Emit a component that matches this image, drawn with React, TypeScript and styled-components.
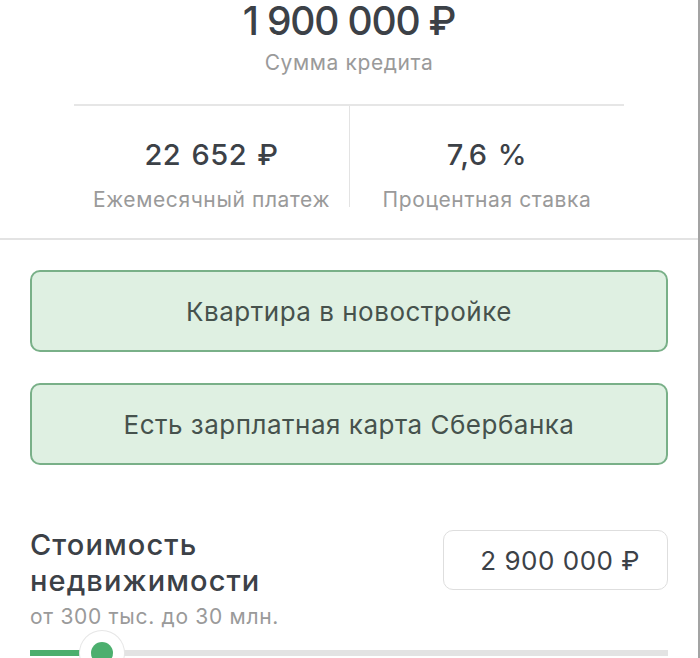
import React from 'react';
import styled, { createGlobalStyle } from 'styled-components';

const GlobalStyle = createGlobalStyle`
  body {
    margin: 0;
    background: #ffffff;
    font-family: Inter, Roboto, "Liberation Sans", sans-serif;
  }
`;

const Screen = styled.div`
  width: 700px;
  height: 658px;
  box-sizing: border-box;
  overflow: hidden;
  background: #ffffff;
  border-right: 2px solid #a3a3a3;
`;

const Summary = styled.section`
  display: flex;
  flex-direction: column;
  align-items: center;
  border-bottom: 2px solid #e3e3e3;
  padding-bottom: 31px;
`;

const LoanAmount = styled.div`
  font-size: 39px;
  line-height: 42px;
  font-weight: 500;
  color: #3c4147;
  letter-spacing: -1.2px;
`;

const Caption = styled.div`
  font-size: 21px;
  line-height: 1;
  color: #9a9a9a;
  letter-spacing: 0.6px;
`;

const Stats = styled.div`
  display: grid;
  grid-template-columns: 1fr 1fr;
  width: 550px;
  margin-top: 31px;
  border-top: 2px solid #e6e6e6;
`;

const Stat = styled.div<{ $divider?: boolean }>`
  display: flex;
  flex-direction: column;
  align-items: center;
  padding-top: 34px;
  height: 101px;
  box-sizing: border-box;
  border-left: ${(p) => (p.$divider ? '1px solid #e3e3e3' : 'none')};
`;

const StatValue = styled.div`
  font-size: 29px;
  line-height: 30px;
  font-weight: 500;
  color: #3c4147;
  margin-bottom: 19px;
  letter-spacing: 0.5px;
  word-spacing: 2px;
`;

const Options = styled.div`
  display: flex;
  flex-direction: column;
  gap: 31px;
  padding: 30px 30px 0 30px;
`;

const OptionButton = styled.button`
  height: 82px;
  box-sizing: border-box;
  border: 2px solid #79b088;
  border-radius: 10px;
  background: #dff0e2;
  font-family: Inter, Roboto, "Liberation Sans", sans-serif;
  font-size: 26px;
  letter-spacing: 0.5px;
  color: #46524d;
  cursor: pointer;
`;

const Field = styled.section`
  display: grid;
  grid-template-columns: 1fr auto;
  align-items: start;
  padding: 62px 30px 0 30px;
`;

const FieldLabel = styled.div`
  font-size: 29px;
  line-height: 36px;
  font-weight: 500;
  color: #3c4147;
  letter-spacing: 1.1px;
`;

const Range = styled.div`
  margin-top: 7px;
  font-size: 21px;
  line-height: 22px;
  color: #9a9a9a;
  letter-spacing: 0.7px;
`;

const ValueBox = styled.div`
  width: 225px;
  height: 60px;
  box-sizing: border-box;
  border: 1px solid #dedede;
  border-radius: 10px;
  display: flex;
  align-items: center;
  justify-content: flex-end;
  padding-right: 27px;
  font-size: 26px;
  letter-spacing: 0.5px;
  color: #3c4147;
  margin-top: 3px;
`;

const Slider = styled.div`
  position: relative;
  margin: 22px 30px 0 30px;
  height: 6px;
  background: #e3e3e3;
`;

const SliderFill = styled.div`
  height: 100%;
  background: #4caf6e;
`;

const Thumb = styled.div`
  position: absolute;
  top: -19px;
  width: 44px;
  height: 44px;
  margin-left: -22px;
  border-radius: 50%;
  background: #ffffff;
  box-shadow: 0 0 0 1px #e6e6e6;
  display: flex;
  align-items: center;
  justify-content: center;

  &::after {
    content: '';
    width: 22px;
    height: 22px;
    border-radius: 50%;
    background: #4caf6e;
  }
`;

export default function App() {
  const fill = 72;
  return (
    <Screen>
      <GlobalStyle />
      <Summary>
        <LoanAmount>1 900 000 ₽</LoanAmount>
        <Caption style={{ marginTop: 10 }}>Сумма кредита</Caption>
        <Stats>
          <Stat>
            <StatValue>22 652 ₽</StatValue>
            <Caption>Ежемесячный платеж</Caption>
          </Stat>
          <Stat $divider>
            <StatValue>7,6 %</StatValue>
            <Caption>Процентная ставка</Caption>
          </Stat>
        </Stats>
      </Summary>
      <Options>
        <OptionButton>Квартира в новостройке</OptionButton>
        <OptionButton>Есть зарплатная карта Сбербанка</OptionButton>
      </Options>
      <Field>
        <div>
          <FieldLabel>
            Стоимость
            <br />
            недвижимости
          </FieldLabel>
          <Range>от 300 тыс. до 30 млн.</Range>
        </div>
        <ValueBox>2 900 000 ₽</ValueBox>
      </Field>
      <Slider>
        <SliderFill style={{ width: fill }} />
        <Thumb style={{ left: fill }} />
      </Slider>
    </Screen>
  );
}
